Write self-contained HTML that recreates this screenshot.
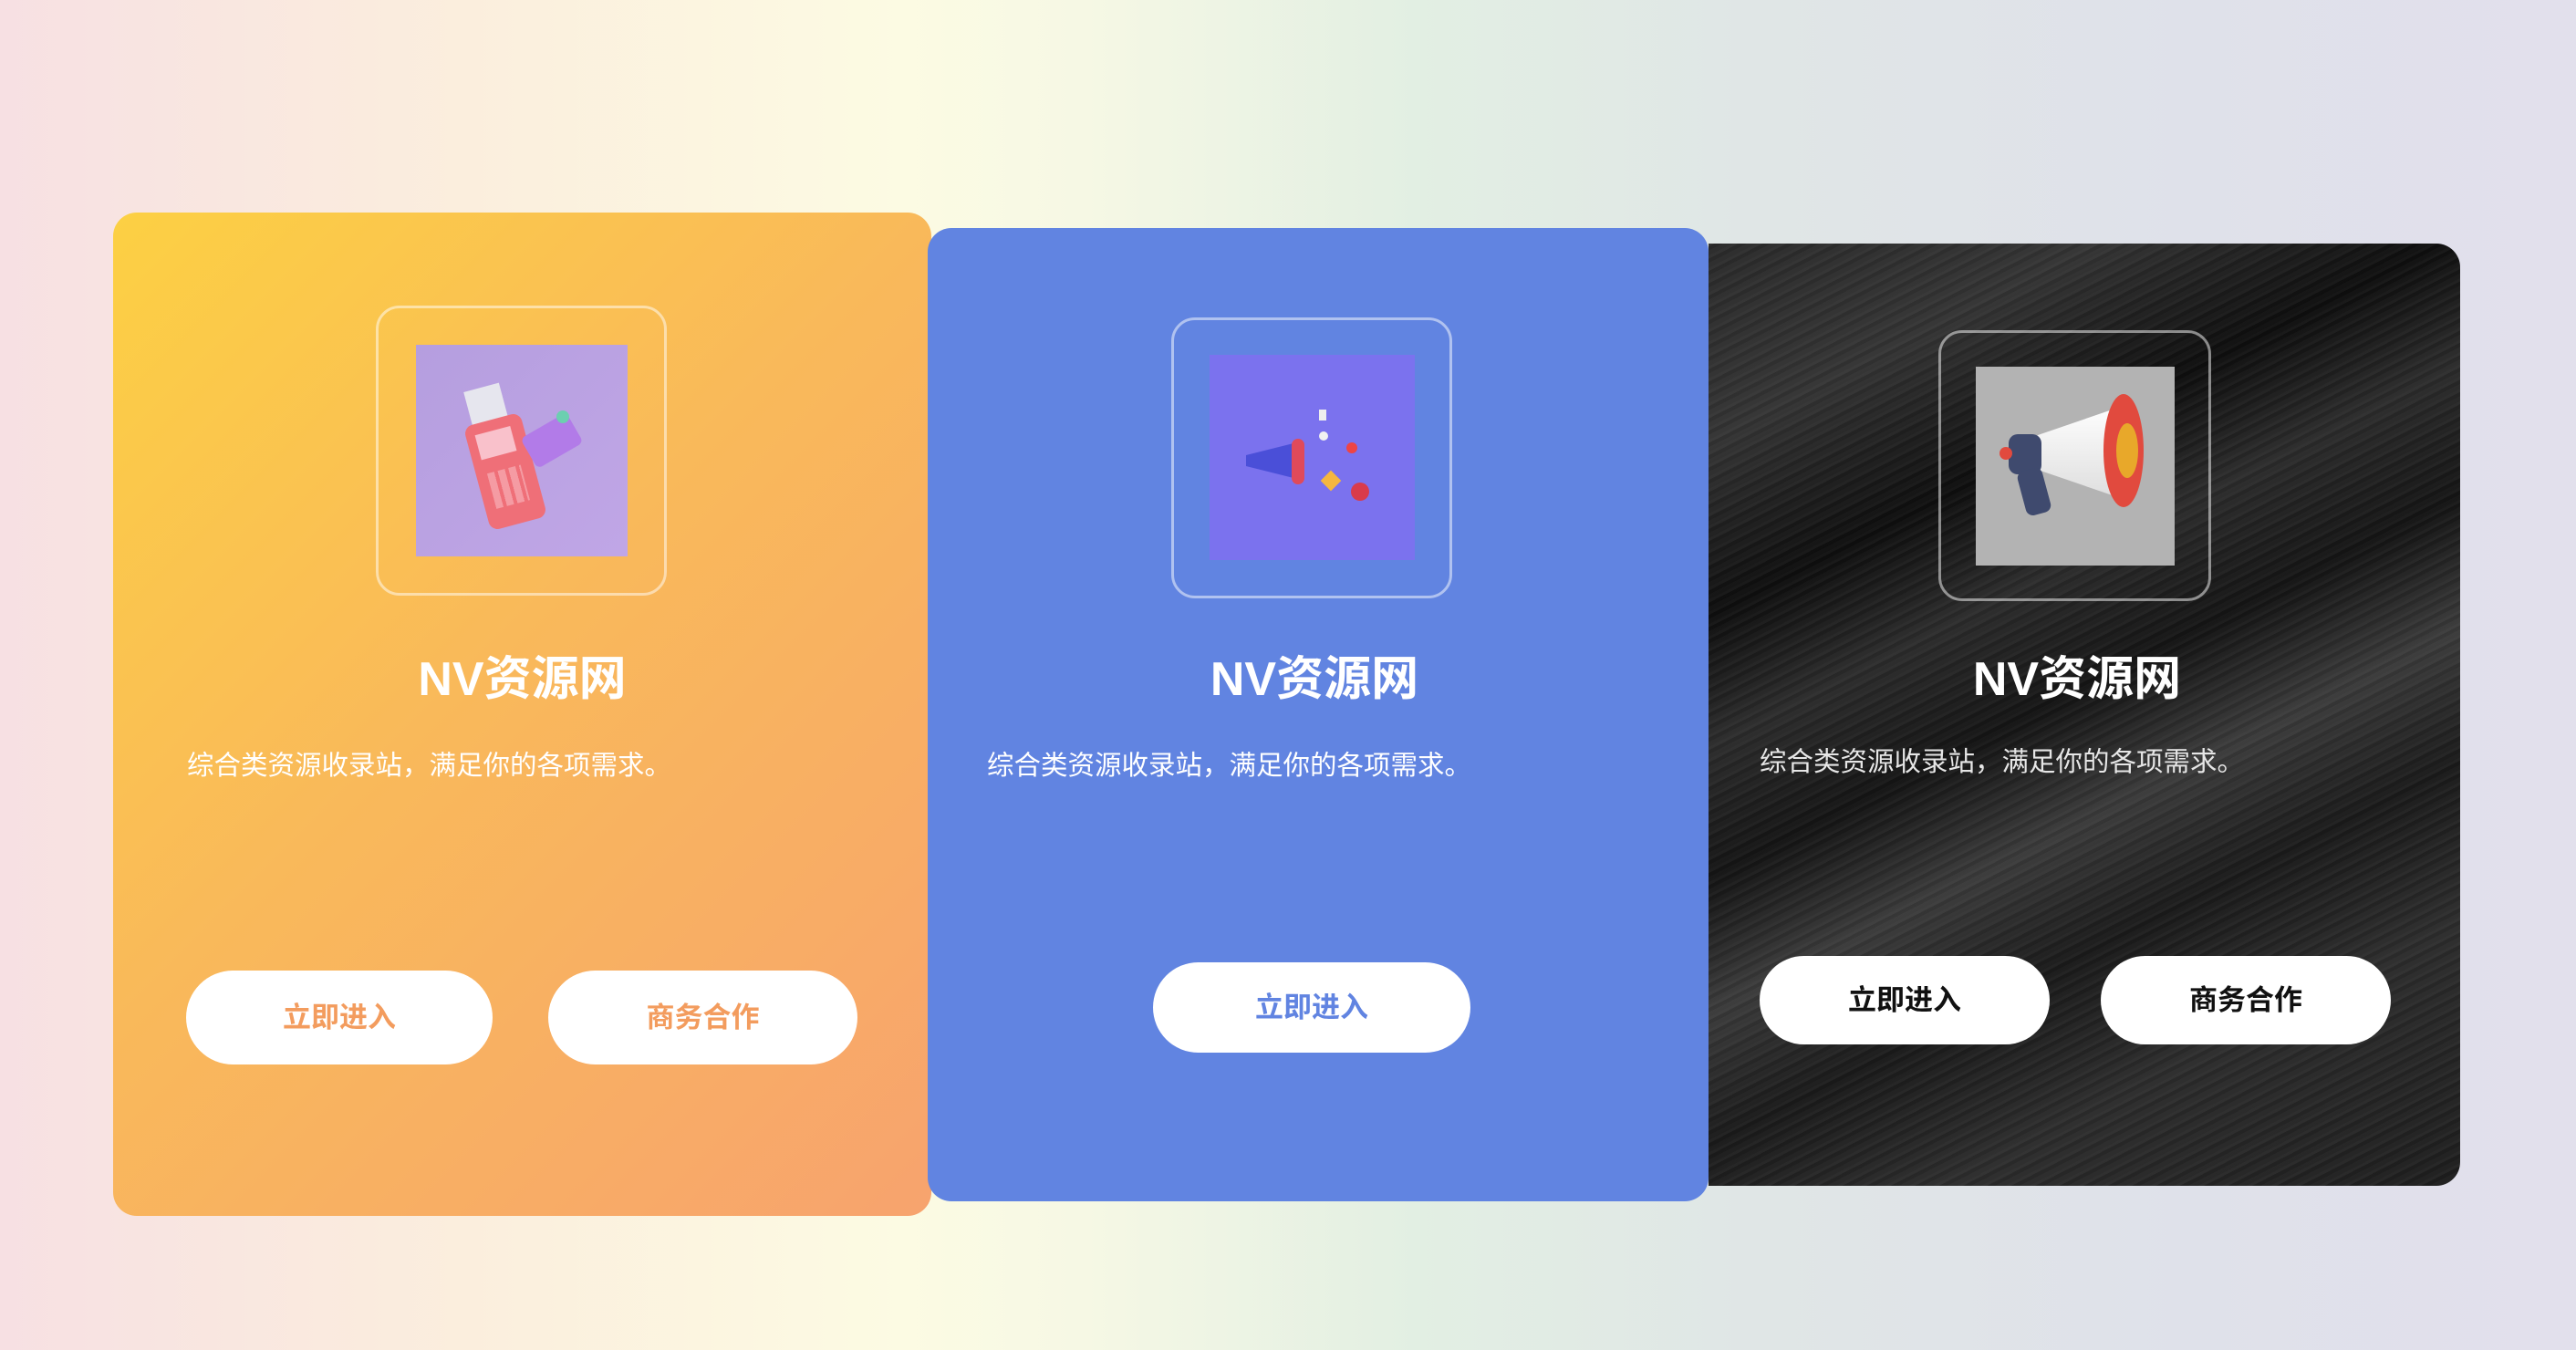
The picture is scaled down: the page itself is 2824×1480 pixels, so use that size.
<!DOCTYPE html>
<html><head><meta charset="utf-8"><style>
*{margin:0;padding:0;box-sizing:border-box}
body{width:2824px;height:1480px;overflow:hidden;position:relative;font-family:"Liberation Sans","Noto Sans CJK SC",sans-serif;
background:linear-gradient(90deg,#f7e0e3 0%,#fbeedd 18%,#fcfbe3 35%,#f6f8e4 42%,#e2efe3 55%,#e0e6e6 68%,#dfe1ea 85%,#e2e0ec 100%)}
.card{position:absolute;border-radius:26px;overflow:hidden;color:#fff}
.c1{left:124px;top:233px;width:897px;height:1100px;background:linear-gradient(135deg,#fcd043 0%,#f9b95a 45%,#f7a36e 100%)}
.c2{left:1017px;top:250px;width:856px;height:1067px;background:#6184e1}
.c3{left:1873px;top:267px;width:824px;height:1033px;background:
repeating-linear-gradient(153deg,rgba(255,255,255,0.04) 0 3px,rgba(0,0,0,0.05) 3px 7px,rgba(255,255,255,0.02) 7px 12px),
linear-gradient(153deg,#2a2a2a 0%,#333 15%,#0e0e0e 28%,#2b2b2b 38%,#141414 48%,#3a3a3a 58%,#1a1a1a 68%,#2c2c2c 80%,#1d1d1d 100%);border-radius:0 26px 26px 0}
.box{position:absolute;border:3px solid rgba(255,255,255,0.5);border-radius:26px}
.img{position:absolute}
.title{position:absolute;width:100%;text-align:center;font-size:52px;font-weight:bold;line-height:60px}
.desc{position:absolute;font-size:29.5px;line-height:40px;color:#fff;white-space:nowrap}
.btn{position:absolute;background:#fff;border-radius:60px;text-align:center;font-weight:bold;font-size:31px}
</style></head><body>

<div class="card c1">
 <div class="box" style="left:288px;top:102px;width:319px;height:318px"></div>
 <div class="img" style="left:332px;top:145px;width:232px;height:232px;background:linear-gradient(135deg,#b59edf,#c0a6e6)">
  <div style="position:absolute;left:58px;top:46px;width:40px;height:50px;background:#e6e6ee;transform:rotate(-15deg)"></div>
  <div style="position:absolute;left:66px;top:80px;width:64px;height:118px;background:#ef6f78;border-radius:10px;transform:rotate(-15deg)">
   <div style="position:absolute;left:10px;top:12px;width:40px;height:28px;background:#f9c1cb"></div>
   <div style="position:absolute;left:12px;top:56px;width:38px;height:40px;background:repeating-linear-gradient(90deg,#f59ba3 0 8px,transparent 8px 12px)"></div>
  </div>
  <div style="position:absolute;left:120px;top:86px;width:58px;height:38px;background:#b27be8;border-radius:6px;transform:rotate(-30deg)"></div>
  <div style="position:absolute;left:154px;top:72px;width:14px;height:14px;background:#6ccfb0;border-radius:50%"></div>
 </div>
 <div class="title" style="top:482px">NV资源网</div>
 <div class="desc" style="left:81px;top:587px">综合类资源收录站，满足你的各项需求。</div>
 <div class="btn" style="left:80px;top:831px;width:336px;height:103px;line-height:103px;color:#f39c5e">立即进入</div>
 <div class="btn" style="left:477px;top:831px;width:339px;height:103px;line-height:103px;color:#f39c5e">商务合作</div>
</div>

<div class="card c2">
 <div class="box" style="left:267px;top:98px;width:308px;height:308px"></div>
 <div class="img" style="left:309px;top:139px;width:225px;height:225px;background:#7b72ee">
  <div style="position:absolute;left:40px;top:96px;width:56px;height:40px;background:#4a4fd8;clip-path:polygon(0 35%,100% 0,100% 100%,0 65%)"></div>
  <div style="position:absolute;left:90px;top:92px;width:14px;height:50px;background:#e04a5a;border-radius:7px"></div>
  <div style="position:absolute;left:120px;top:84px;width:10px;height:10px;background:#f1f1f1;border-radius:50%"></div>
  <div style="position:absolute;left:150px;top:96px;width:12px;height:12px;background:#e44;border-radius:50%"></div>
  <div style="position:absolute;left:125px;top:130px;width:16px;height:16px;background:#f5b63f;transform:rotate(45deg)"></div>
  <div style="position:absolute;left:155px;top:140px;width:20px;height:20px;background:#d93b4b;border-radius:50%"></div>
  <div style="position:absolute;left:120px;top:60px;width:8px;height:12px;background:#eee"></div>
 </div>
 <div class="title" style="top:465px;padding-right:8px">NV资源网</div>
 <div class="desc" style="left:65px;top:570px">综合类资源收录站，满足你的各项需求。</div>
 <div class="btn" style="left:247px;top:805px;width:348px;height:99px;line-height:99px;color:#6184e1">立即进入</div>
</div>

<div class="card c3">
 <div class="box" style="left:252px;top:95px;width:299px;height:297px"></div>
 <div class="img" style="left:293px;top:135px;width:218px;height:218px;background:#b3b3b3">
  <div style="position:absolute;left:60px;top:40px;width:110px;height:108px;background:linear-gradient(#fff,#ddd);clip-path:polygon(0 35%,100% 0,100% 100%,0 65%)"></div>
  <div style="position:absolute;left:140px;top:30px;width:44px;height:124px;background:#e14a3e;border-radius:50%"></div>
  <div style="position:absolute;left:154px;top:62px;width:24px;height:60px;background:#e8a82a;border-radius:50%"></div>
  <div style="position:absolute;left:36px;top:74px;width:36px;height:44px;background:#3f4a6e;border-radius:10px"></div>
  <div style="position:absolute;left:26px;top:88px;width:14px;height:14px;background:#e14a3e;border-radius:50%"></div>
  <div style="position:absolute;left:50px;top:112px;width:28px;height:50px;background:#3f4a6e;border-radius:8px;transform:rotate(-15deg)"></div>
 </div>
 <div class="title" style="top:448px;padding-right:16px">NV资源网</div>
 <div class="desc" style="left:56px;top:549px;color:#e6e6e6">综合类资源收录站，满足你的各项需求。</div>
 <div class="btn" style="left:56px;top:781px;width:318px;height:97px;line-height:97px;color:#111">立即进入</div>
 <div class="btn" style="left:430px;top:781px;width:318px;height:97px;line-height:97px;color:#111">商务合作</div>
</div>

</body></html>
